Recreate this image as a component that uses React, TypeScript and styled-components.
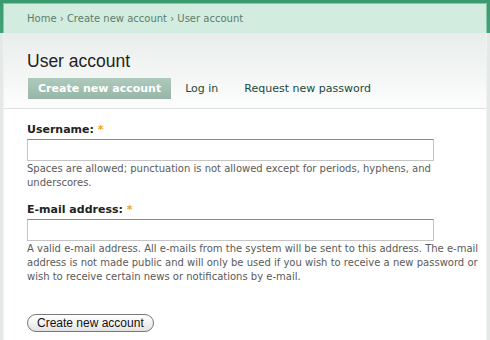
import React from "react";
import styled, { createGlobalStyle } from "styled-components";

const Global = createGlobalStyle`
  html, body { margin: 0; padding: 0; }
  body {
    width: 490px;
    height: 340px;
    overflow: hidden;
    background: linear-gradient(to bottom, #3a9b70 0px, #40a277 33px, #e4e9e7 33px, #e4e9e7 100%);
    font-family: "DejaVu Sans", Verdana, sans-serif;
  }
`;

const Page = styled.div`
  padding: 4px 4px 0 4px;
`;

const Panel = styled.div`
  background: #fff;
  box-shadow: 0 0 0 1px rgba(255, 255, 255, 0.4);
  height: 336px;
`;

const Breadcrumb = styled.div`
  background: #d3ece0;
  height: 29px;
  line-height: 29px;
  padding-left: 23px;
  font-size: 10px;
  color: #5b7c6d;
  white-space: nowrap;
`;

const Header = styled.div`
  background: linear-gradient(to bottom, #e8edeb 0%, #f4f6f5 55%, #fcfdfc 100%);
  padding: 17px 23px 0 23px;
  height: 76px;
  box-sizing: border-box;
  border-bottom: 1px solid #dde2e0;
`;

const Title = styled.h1`
  margin: 0;
  font-family: "Liberation Sans", Arial, sans-serif;
  font-weight: normal;
  font-size: 17.5px;
  line-height: 22px;
  color: #1f1f1f;
`;

const Tabs = styled.div`
  display: flex;
  align-items: center;
  margin-top: 6px;
`;

const Tab = styled.a<{ $active?: boolean }>`
  display: block;
  font-size: 11px;
  line-height: 21px;
  height: 21px;
  padding: 0 ${(p) => (p.$active ? "10px" : "0")};
  margin-left: ${(p) => (p.$active ? "1px" : "0")};
  margin-right: ${(p) => (p.$active ? "14px" : "26px")};
  color: ${(p) => (p.$active ? "#fff" : "#1c4a3b")};
  font-weight: ${(p) => (p.$active ? "bold" : "normal")};
  background: ${(p) =>
    p.$active ? "linear-gradient(to bottom, #adcabd 0%, #97b6a8 100%)" : "transparent"};
  text-decoration: none;
  white-space: nowrap;
`;

const Content = styled.form`
  padding: 14px 23px 0 23px;
`;

const Field = styled.div`
  margin-bottom: 13px;
`;

const Label = styled.label`
  display: block;
  font-size: 11px;
  font-weight: bold;
  color: #222;
  line-height: 14px;
  margin-bottom: 2px;
`;

const Star = styled.span`
  color: #f2a20f;
`;

const Input = styled.input`
  display: block;
  width: 407px;
  height: 22px;
  box-sizing: border-box;
  border: 1px solid #c4c4c4;
  border-top-color: #8a8a8a;
  background: #fff;
  margin: 0;
`;

const Desc = styled.div`
  font-size: 10px;
  line-height: 14px;
  color: #5a5a5a;
  margin-top: 1px;
  white-space: nowrap;
`;

const Line = styled.span`
  display: block;
`;

const Button = styled.button`
  display: block;
  margin-top: 30px;
  font-family: "Liberation Sans", Arial, sans-serif;
  font-size: 12px;
  height: 18px;
  padding: 0 9px;
  border: 1px solid #777;
  border-radius: 9px;
  background: linear-gradient(to bottom, #ffffff 0%, #f3f3f3 50%, #e2e2e2 100%);
  color: #111;
  line-height: 16px;
`;

export default function App() {
  return (
    <>
      <Global />
      <Page>
        <Panel>
          <Breadcrumb>Home › Create new account › User account</Breadcrumb>
          <Header>
            <Title>User account</Title>
            <Tabs>
              <Tab $active>Create new account</Tab>
              <Tab>Log in</Tab>
              <Tab>Request new password</Tab>
            </Tabs>
          </Header>
          <Content>
            <Field>
              <Label>
                Username: <Star>*</Star>
              </Label>
              <Input type="text" />
              <Desc>
                <Line>Spaces are allowed; punctuation is not allowed except for periods, hyphens, and</Line>
                <Line>underscores.</Line>
              </Desc>
            </Field>
            <Field>
              <Label>
                E-mail address: <Star>*</Star>
              </Label>
              <Input type="text" />
              <Desc>
                <Line>A valid e-mail address. All e-mails from the system will be sent to this address. The e-mail</Line>
                <Line>address is not made public and will only be used if you wish to receive a new password or</Line>
                <Line>wish to receive certain news or notifications by e-mail.</Line>
              </Desc>
            </Field>
            <Button type="button">Create new account</Button>
          </Content>
        </Panel>
      </Page>
    </>
  );
}
